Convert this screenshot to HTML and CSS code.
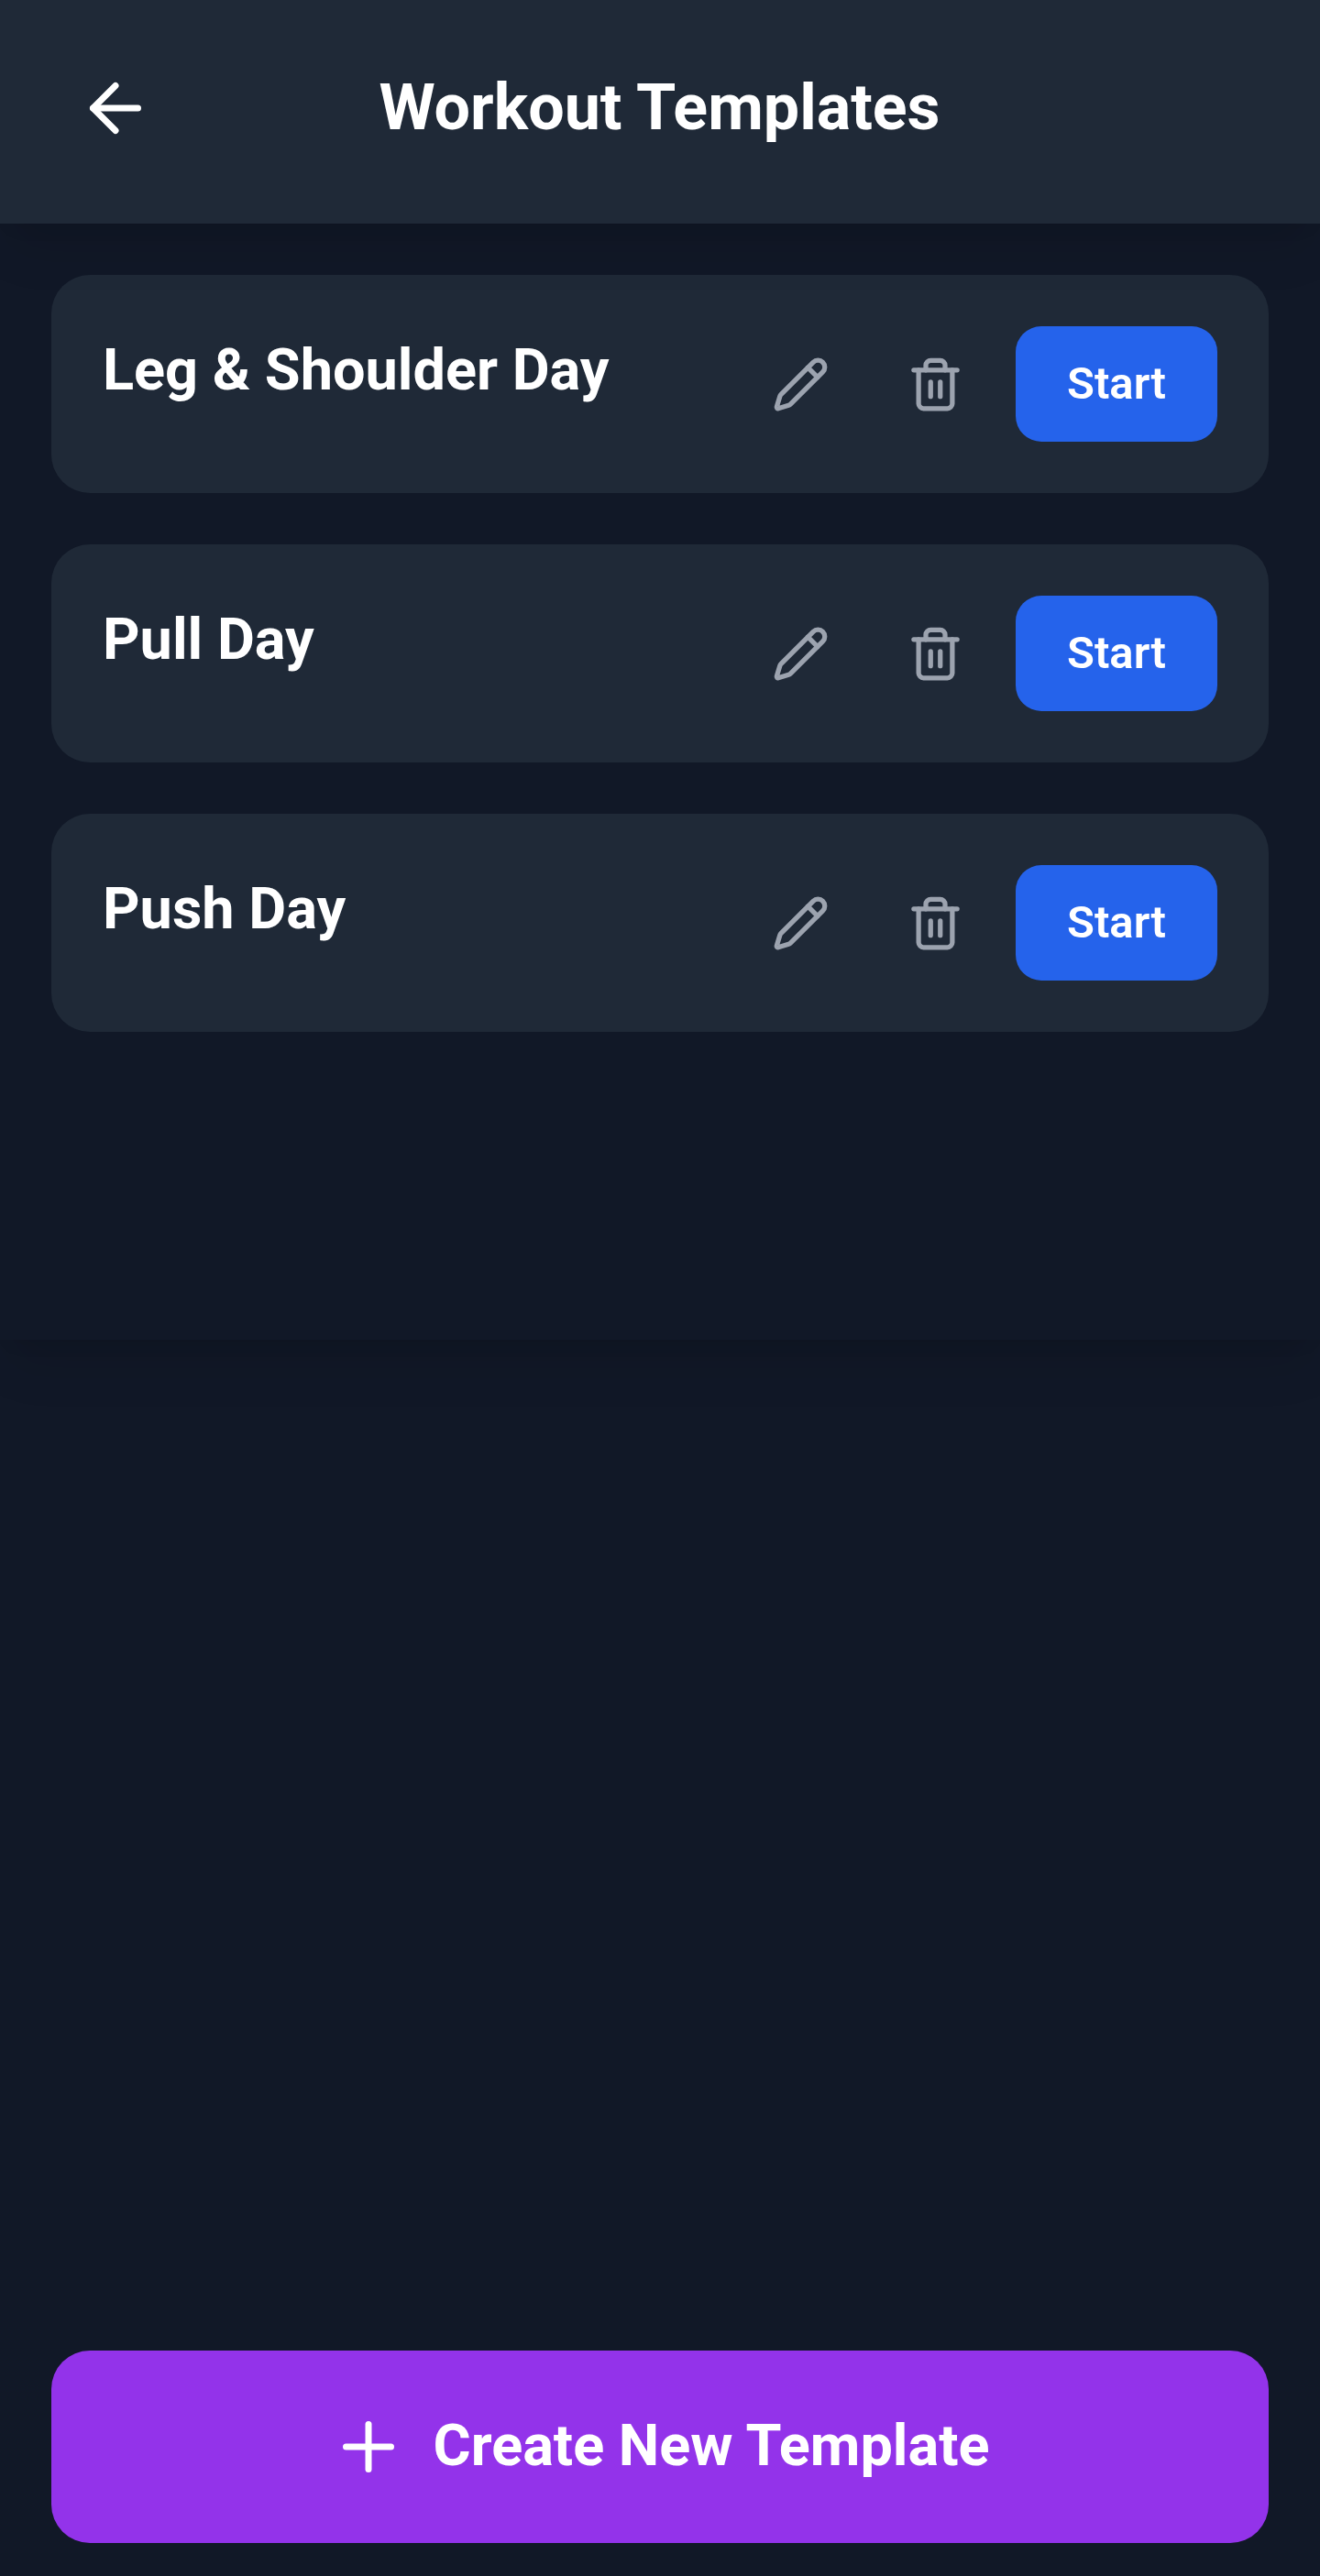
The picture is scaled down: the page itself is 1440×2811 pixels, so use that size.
FILE: index.html
```html
<!DOCTYPE html>
<html lang="en">
<head>
<meta charset="utf-8">
<title>Workout Templates</title>
<link rel="stylesheet" href="styles.css">
</head>
<body>
<svg width="0" height="0" class="sprite" aria-hidden="true">
  <symbol id="pencil" viewBox="0 0 24 24">
    <path d="M21.174 6.812a1 1 0 0 0-3.986-3.987L3.842 16.174a2 2 0 0 0-.5.83l-1.321 4.352a.5.5 0 0 0 .623.622l4.353-1.32a2 2 0 0 0 .83-.497z"/>
    <path d="m15 5 4 4"/>
  </symbol>
  <symbol id="trash" viewBox="0 0 24 24">
    <path d="M3 6h18"/>
    <path d="M19 6v14c0 1-1 2-2 2H7c-1 0-2-1-2-2V6"/>
    <path d="M8 6V4c0-1 1-2 2-2h4c1 0 2 1 2 2v2"/>
    <path d="M10 11v6"/>
    <path d="M14 11v6"/>
  </symbol>
</svg>
<div class="app">
  <header class="header">
    <button class="icon-btn back" aria-label="Back">
      <svg class="icon icon-lg" viewBox="0 0 24 24"><path d="m12 19-7-7 7-7"/><path d="M19 12H5"/></svg>
    </button>
    <h1 class="title">Workout Templates</h1>
    <div class="spacer"></div>
  </header>
  <main class="list">
    <article class="card">
      <h2 class="name">Leg &amp; Shoulder Day</h2>
      <div class="actions">
        <button class="icon-btn" aria-label="Edit"><svg class="icon"><use href="#pencil"/></svg></button>
        <button class="icon-btn" aria-label="Delete"><svg class="icon"><use href="#trash"/></svg></button>
        <button class="start">Start</button>
      </div>
    </article>
    <article class="card">
      <h2 class="name">Pull Day</h2>
      <div class="actions">
        <button class="icon-btn" aria-label="Edit"><svg class="icon"><use href="#pencil"/></svg></button>
        <button class="icon-btn" aria-label="Delete"><svg class="icon"><use href="#trash"/></svg></button>
        <button class="start">Start</button>
      </div>
    </article>
    <article class="card">
      <h2 class="name">Push Day</h2>
      <div class="actions">
        <button class="icon-btn" aria-label="Edit"><svg class="icon"><use href="#pencil"/></svg></button>
        <button class="icon-btn" aria-label="Delete"><svg class="icon"><use href="#trash"/></svg></button>
        <button class="start">Start</button>
      </div>
    </article>
  </main>
  <footer class="footer">
    <button class="create">
      <svg class="icon icon-lg" viewBox="0 0 24 24"><path d="M5 12h14"/><path d="M12 5v14"/></svg>
      <span class="create-label">Create New Template</span>
    </button>
  </footer>
</div>
</body>
</html>
```

FILE: styles.css
```css
* {
  box-sizing: border-box;
  margin: 0;
}

body {
  background: #111827;
  color: #fff;
  font-family: Roboto, "Liberation Sans", sans-serif;
}

button {
  border: 0;
  padding: 0;
  background: none;
  color: inherit;
  font: inherit;
}

.sprite {
  display: block;
}

.app {
  display: flex;
  flex-direction: column;
  height: 2811px;
  overflow: hidden;
}

.header {
  display: flex;
  align-items: center;
  justify-content: space-between;
  flex: none;
  height: 244px;
  padding: 48px 56px 56px;
  background: #1f2937;
  z-index: 1;
}

.header,
.list {
  box-shadow: 0 35px 52px -10px rgba(0, 0, 0, 0.1), 0 14px 21px -14px rgba(0, 0, 0, 0.1);
}

.title {
  padding-bottom: 2px;
  font-size: 70px;
  font-weight: 700;
  line-height: 98px;
}

.spacer {
  width: 141px;
}

.icon {
  display: block;
  width: 63px;
  height: 63px;
  fill: none;
  stroke: currentColor;
  stroke-width: 2;
  stroke-linecap: round;
  stroke-linejoin: round;
}

.icon-lg {
  width: 84px;
  height: 84px;
}

.icon-btn {
  padding: 28px;
  color: #9ca3af;
}

.back {
  color: #fff;
}

.list {
  display: flex;
  flex-direction: column;
  flex: none;
  gap: 56px;
  height: 1218px;
  padding: 56px;
  background: #111827;
}

.card {
  display: flex;
  justify-content: space-between;
  align-items: flex-start;
  height: 238px;
  padding: 56px;
  border-radius: 42px;
  background: #1f2937;
}

.name {
  font-size: 63px;
  font-weight: 700;
  line-height: 96px;
}

.actions {
  display: flex;
  align-items: center;
  gap: 28px;
  height: 126px;
}

.actions .start {
  width: 220px;
  height: 126px;
  padding-bottom: 2px;
  border-radius: 28px;
  background: #2563eb;
  font-size: 49px;
  font-weight: 600;
}

.footer {
  margin-top: auto;
  padding: 0 56px 36px;
}

.create {
  display: flex;
  align-items: center;
  justify-content: center;
  gap: 28px;
  width: 100%;
  height: 210px;
  border-radius: 42px;
  background: #9333ea;
  font-size: 63px;
  font-weight: 700;
  line-height: 98px;
}

.create-label {
  padding-bottom: 2px;
}
```
